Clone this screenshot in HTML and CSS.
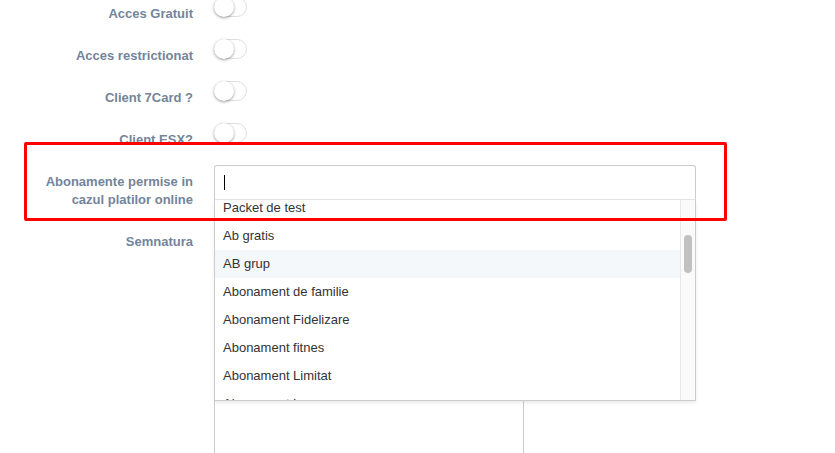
FILE: index.html
```html
<!DOCTYPE html>
<html>
<head>
    <title>Setari client</title>
    <link rel="stylesheet" href="styles.css">
</head>
<body>
    <form class="form">
        <div class="row">
            <label class="control-label">Acces Gratuit</label>
            <div class="controls"><span class="switch"><span class="knob"></span></span></div>
        </div>
        <div class="row">
            <label class="control-label">Acces restrictionat</label>
            <div class="controls"><span class="switch"><span class="knob"></span></span></div>
        </div>
        <div class="row">
            <label class="control-label">Client 7Card ?</label>
            <div class="controls"><span class="switch"><span class="knob"></span></span></div>
        </div>
        <div class="row">
            <label class="control-label">Client ESX?</label>
            <div class="controls"><span class="switch"><span class="knob"></span></span></div>
        </div>
        <div class="row">
            <label class="control-label">Abonamente permise in cazul platilor online</label>
            <div class="controls">
                <div class="select">
                    <div class="select-search"><span class="caret"></span></div>
                    <div class="select-dropdown">
                        <ul class="options">
                            <li>Packet de test</li>
                            <li>Ab gratis</li>
                            <li class="active">AB grup</li>
                            <li>Abonament de familie</li>
                            <li>Abonament Fidelizare</li>
                            <li>Abonament fitnes</li>
                            <li>Abonament Limitat</li>
                            <li>Abonament Lunar</li>
                        </ul>
                        <div class="scrollbar"><span class="thumb"></span></div>
                    </div>
                </div>
            </div>
        </div>
        <div class="row">
            <label class="control-label">Semnatura</label>
            <div class="controls"><textarea class="signature"></textarea></div>
        </div>
    </form>
    <div class="highlight"></div>
</body>
</html>
```

FILE: styles.css
```css
body {
    margin: 0;
    background: #fff;
    font-family: "Liberation Sans", Arial, sans-serif;
    font-size: 13px;
    color: #333;
}
.form {
    margin-top: -3px;
}
.row {
    display: grid;
    grid-template-columns: 193px 482px;
    column-gap: 21px;
    margin-bottom: 16px;
}
.control-label {
    padding: 8px 0 0 30px;
    text-align: right;
    font-weight: bold;
    line-height: 18px;
    color: #74849a;
}
.switch {
    display: block;
    position: relative;
    width: 33px;
    height: 20px;
    box-sizing: border-box;
    border: 1px solid #dfdfdf;
    border-radius: 10px;
    background: #fff;
}
.knob {
    position: absolute;
    top: -1px;
    left: -1px;
    width: 20px;
    height: 20px;
    border-radius: 50%;
    background: #fff;
    box-shadow: 0 1px 3px rgba(0, 0, 0, 0.4);
}
.select {
    position: relative;
    z-index: 2;
}
.select-search {
    height: 35px;
    box-sizing: border-box;
    padding: 9px 0 0 9px;
    border: 1px solid #ccc;
    border-bottom-color: #e4e4e4;
    border-radius: 3px 3px 0 0;
    background: #fff;
}
.caret {
    display: block;
    width: 1px;
    height: 15px;
    background: #000;
}
.select-dropdown {
    position: absolute;
    top: 35px;
    left: 0;
    right: 0;
    height: 201px;
    box-sizing: border-box;
    display: flex;
    border: 1px solid #ccc;
    border-top: none;
    background: #fff;
    box-shadow: 0 2px 3px rgba(0, 0, 0, 0.08);
    overflow: hidden;
}
.options {
    flex: 1;
    list-style: none;
    margin: -6px 0 0;
    padding: 0;
}
.options li {
    height: 28px;
    line-height: 28px;
    padding-left: 8px;
    white-space: nowrap;
}
.options li.active {
    background: #f4f8fb;
}
.scrollbar {
    width: 14px;
    border-left: 1px solid #e8e8e8;
    background: #fafafa;
    position: relative;
}
.thumb {
    position: absolute;
    top: 35px;
    left: 3px;
    width: 8px;
    height: 38px;
    border-radius: 4px;
    background: #c1c1c1;
}
.signature {
    display: block;
    width: 310px;
    height: 260px;
    box-sizing: border-box;
    border: 1px solid #ccc;
    resize: none;
}
.highlight {
    position: absolute;
    left: 24px;
    top: 142px;
    width: 703px;
    height: 79px;
    box-sizing: border-box;
    border: 3px solid #ff0000;
    border-radius: 2px;
    z-index: 5;
}
```
